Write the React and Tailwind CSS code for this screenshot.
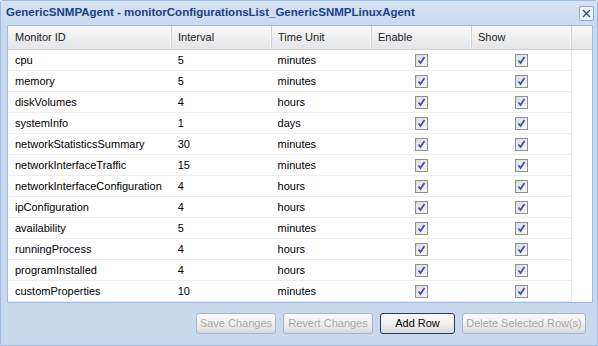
import React from 'react';

const rows = [
  ['cpu', '5', 'minutes'],
  ['memory', '5', 'minutes'],
  ['diskVolumes', '4', 'hours'],
  ['systemInfo', '1', 'days'],
  ['networkStatisticsSummary', '30', 'minutes'],
  ['networkInterfaceTraffic', '15', 'minutes'],
  ['networkInterfaceConfiguration', '4', 'hours'],
  ['ipConfiguration', '4', 'hours'],
  ['availability', '5', 'minutes'],
  ['runningProcess', '4', 'hours'],
  ['programInstalled', '4', 'hours'],
  ['customProperties', '10', 'minutes'],
];

const Check = () => (
  <div className="w-[13px] h-[13px] border border-[#8e8f8f] bg-gradient-to-br from-[#dcdcdc] to-[#f7f7f7] flex items-center justify-center">
    <svg width="9" height="9" viewBox="0 0 9 9">
      <path d="M1.5 4.5 L3.5 7 L7.5 1" fill="none" stroke="#3f54a5" strokeWidth="1.8" />
    </svg>
  </div>
);

const Btn = ({ label, w, active }) => (
  <div
    className={`h-[21px] ${w} rounded-[3px] border flex items-center justify-center bg-gradient-to-b from-[#fbfbfb] via-[#f0f0f0] to-[#d8d8d8] ${
      active ? 'border-[#1f3a68] text-black' : 'border-[#a3b8d3] text-[#a7a7a7]'
    }`}
  >
    {label}
  </div>
);

const HeadCell = ({ label, w }) => (
  <div className={`${w} h-full flex items-center px-[6px] border-r border-[#d0d0d0] shadow-[inset_-1px_0_0_#fafafa]`}>
    {label}
  </div>
);

export default function App() {
  return (
    <div
      className="w-[598px] h-[346px] bg-[#c9d8ea] border border-[#99bbe8] rounded-tl-[3px] rounded-tr-[3px] flex flex-col text-[11px]"
      style={{ fontFamily: '"Liberation Sans", Arial, sans-serif' }}
    >
      <div className="h-[24px] flex items-center justify-between pl-[5px] pr-[3px] bg-gradient-to-b from-[#d6e3f3] to-[#cad9ec]">
        <span className="font-bold text-[#15428b] text-[11.5px]">
          GenericSNMPAgent - monitorConfigurationsList_GenericSNMPLinuxAgent
        </span>
        <div className="w-[15px] h-[15px] border border-[#8ca9d4] rounded-[2px] bg-[#eef4fb] flex items-center justify-center">
          <svg width="9" height="9" viewBox="0 0 9 9">
            <path d="M1 1 L8 8 M8 1 L1 8" stroke="#2d4f8e" strokeWidth="1.4" />
          </svg>
        </div>
      </div>
      <div className="ml-[6px] w-[586px] border border-[#99bbe8] bg-white flex flex-col">
        <div className="h-[24px] flex text-[#222] bg-gradient-to-b from-[#f9f9f9] to-[#e4e5e7] border-b border-[#d0d0d0]">
          <HeadCell label="Monitor ID" w="w-[164px] pl-[7px]" />
          <HeadCell label="Interval" w="w-[100px]" />
          <HeadCell label="Time Unit" w="w-[100px]" />
          <HeadCell label="Enable" w="w-[100px]" />
          <HeadCell label="Show" w="w-[100px]" />
          <div className="flex-1" />
        </div>
        {rows.map(([id, interval, unit]) => (
          <div key={id} className="h-[21px] w-[564px] flex items-center text-black border-b border-r border-[#ededed]">
            <div className="w-[164px] pl-[7px]">{id}</div>
            <div className="w-[100px] pl-[6px]">{interval}</div>
            <div className="w-[100px] pl-[6px]">{unit}</div>
            <div className="w-[100px] flex justify-center"><Check /></div>
            <div className="w-[100px] flex justify-center"><Check /></div>
          </div>
        ))}
      </div>
      <div className="flex justify-end gap-[7px] pr-[11px] mt-[10px]">
        <Btn label="Save Changes" w="w-[80px]" />
        <Btn label="Revert Changes" w="w-[90px]" />
        <Btn label="Add Row" w="w-[75px]" active />
        <Btn label="Delete Selected Row(s)" w="w-[124px]" />
      </div>
    </div>
  );
}
